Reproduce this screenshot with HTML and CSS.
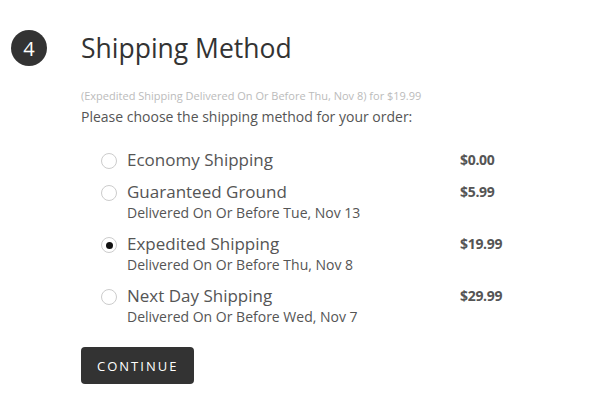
FILE: index.html
```html
<!DOCTYPE html>
<html>
<head>
    <title>Shipping Method</title>
    <link rel="stylesheet" href="styles.css">
</head>
<body>
    <div class="step">
        <div class="step-head">
            <span class="step-num">4</span>
            <h2>Shipping Method</h2>
        </div>
        <div class="step-body">
            <p class="summary">(Expedited Shipping Delivered On Or Before Thu, Nov 8) for $19.99</p>
            <p class="prompt">Please choose the shipping method for your order:</p>

            <ul class="methods">
                <li class="method">
                    <span class="radio"></span>
                    <div class="info">
                        <div class="name">Economy Shipping</div>
                    </div>
                    <div class="price">$0.00</div>
                </li>
                <li class="method">
                    <span class="radio"></span>
                    <div class="info">
                        <div class="name">Guaranteed Ground</div>
                        <div class="eta">Delivered On Or Before Tue, Nov 13</div>
                    </div>
                    <div class="price">$5.99</div>
                </li>
                <li class="method">
                    <span class="radio checked"></span>
                    <div class="info">
                        <div class="name">Expedited Shipping</div>
                        <div class="eta">Delivered On Or Before Thu, Nov 8</div>
                    </div>
                    <div class="price">$19.99</div>
                </li>
                <li class="method">
                    <span class="radio"></span>
                    <div class="info">
                        <div class="name">Next Day Shipping</div>
                        <div class="eta">Delivered On Or Before Wed, Nov 7</div>
                    </div>
                    <div class="price">$29.99</div>
                </li>
            </ul>

            <button class="continue">Continue</button>
        </div>
    </div>
</body>
</html>
```

FILE: styles.css
```css
body {
    margin: 0;
    font-family: "Open Sans", Arial, sans-serif;
    color: #555;
    background: #fff;
}
.step {
    padding: 30px 0 0 11px;
}
.step-head {
    display: flex;
    align-items: center;
    gap: 34px;
}
.step-num {
    width: 36px;
    height: 36px;
    border-radius: 50%;
    background: #333;
    color: #fff;
    font-size: 20px;
    display: flex;
    align-items: center;
    justify-content: center;
}
h2 {
    margin: 0;
    font-size: 26.5px;
    font-weight: 400;
    color: #333;
    line-height: 36px;
}
.step-body {
    padding-left: 70px;
}
.summary {
    margin: 22px 0 0;
    font-size: 11px;
    line-height: 16px;
    color: #bbb;
}
.prompt {
    margin: 3px 0 0;
    font-size: 14px;
    line-height: 20px;
    color: #555;
}
.methods {
    list-style: none;
    margin: 22px 0 0;
    padding: 0 0 0 20px;
    width: 419px;
}
.method {
    display: flex;
    align-items: flex-start;
    margin-bottom: 10px;
}
.radio {
    width: 14px;
    height: 14px;
    border: 1px solid #ccc;
    border-radius: 50%;
    margin: 4px 10px 0 0;
    display: flex;
    align-items: center;
    justify-content: center;
    flex-shrink: 0;
}
.radio.checked::after {
    content: "";
    width: 7px;
    height: 7px;
    border-radius: 50%;
    background: #111;
}
.info {
    flex: 1;
}
.name {
    font-size: 17px;
    line-height: 22px;
    color: #555;
}
.eta {
    font-size: 14px;
    line-height: 20px;
    color: #555;
}
.price {
    width: 60px;
    font-size: 14px;
    font-weight: 700;
    letter-spacing: -0.3px;
    line-height: 22px;
    color: #555;
}
.continue {
    margin-top: 10px;
    background: #333;
    color: #fff;
    border: none;
    border-radius: 4px;
    height: 37px;
    padding: 0 16px;
    font-family: "Open Sans", Arial, sans-serif;
    font-size: 13px;
    letter-spacing: 2px;
    text-transform: uppercase;
}
```
